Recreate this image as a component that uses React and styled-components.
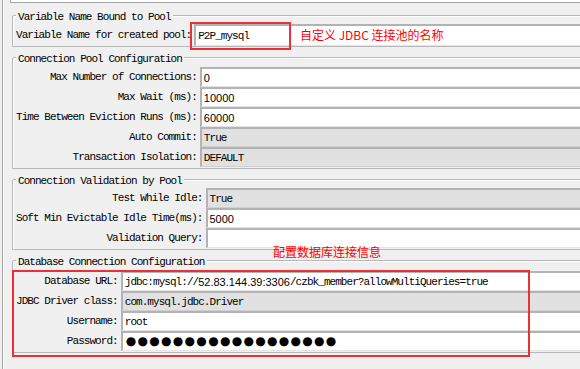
import React from "react";
import styled, { createGlobalStyle, css } from "styled-components";

const Global = createGlobalStyle`
  html, body { margin: 0; padding: 0; background: #f0f0f0; }
  #root { width: 580px; height: 369px; overflow: hidden; }
`;

const mono = css`
  font-family: "Liberation Mono", "DejaVu Sans Mono", monospace;
  font-size: 11px;
  letter-spacing: -0.95px;
  color: #000;
`;

const sans = css`
  font-family: "Liberation Sans", Arial, sans-serif;
  font-size: 11px;
  letter-spacing: 0;
  color: #000;
`;

const Page = styled.div`
  position: relative;
  width: 580px;
  height: 369px;
  overflow: hidden;
  background: #f0f0f0;
  padding-left: 2px;
  box-sizing: border-box;
`;

const Panel = styled.div`
  width: 720px;
  height: 100%;
  border-left: 1px solid #a6a6a6;
  box-shadow: inset 1px 0 0 #ffffff;
  padding-left: 9px;
  box-sizing: border-box;
`;

const TopField = styled.div`
  margin-left: -2px;
  height: 3px;
  box-sizing: border-box;
  background: #ffffff;
  border-left: 1px solid #a8a8a8;
  border-bottom: 1px solid #a8a8a8;
`;

const Frame = styled.section`
  position: relative;
  margin-top: ${(p) => p.$mt}px;
  padding: ${(p) => p.$pt}px 0 ${(p) => p.$pb}px 3px;
  border: 1px solid #b8b8b8;
  border-top-left-radius: 2px;
  box-shadow: inset 1px 1px 0 #ffffff;
`;

const Title = styled.span`
  position: absolute;
  top: -6px;
  left: 3px;
  padding: 0 2px;
  line-height: 14px;
  background: #f0f0f0;
  white-space: nowrap;
  ${mono}
`;

const Grid = styled.div`
  display: grid;
  grid-template-columns: max-content 1fr;
  grid-auto-rows: ${(p) => p.$row || 20}px;
  column-gap: 3px;
`;

const Label = styled.label`
  align-self: center;
  text-align: right;
  white-space: nowrap;
  line-height: 14px;
  ${mono}
`;

const Field = styled.div`
  display: flex;
  align-items: center;
  box-sizing: border-box;
  height: 100%;
  padding-left: 2px;
  white-space: nowrap;
  background: ${(p) => (p.$gray ? "#e1e1e1" : "#ffffff")};
  border-top: 2px solid #b3b3b3;
  border-left: 2px solid #b3b3b3;
  border-bottom: 1px solid ${(p) => (p.$gray ? "#d0d0d0" : "#e4e4e4")};
  ${(p) => (p.$sans ? sans : mono)}
`;

const Num = styled.span`
  ${sans}
`;

const Dots = styled.span`
  font-family: "DejaVu Sans", sans-serif;
  font-size: 12px;
  letter-spacing: 1.3px;
  line-height: 14px;
  color: #000;
  padding-left: 1px;
  margin-top: -2px;
`;

const Note = styled.div`
  position: absolute;
  left: ${(p) => p.$x}px;
  top: ${(p) => p.$y}px;
  font-family: "Noto Sans CJK SC", "Microsoft YaHei", sans-serif;
  font-size: 12px;
  line-height: 16px;
  color: #ff0000;
  white-space: nowrap;
`;

const RedBox = styled.div`
  position: absolute;
  left: ${(p) => p.$x}px;
  top: ${(p) => p.$y}px;
  width: ${(p) => p.$w}px;
  height: ${(p) => p.$h}px;
  box-sizing: border-box;
  border: 2px solid #ec3038;
  pointer-events: none;
`;

export default function App() {
  return (
    <>
      <Global />
      <Page>
        <Panel>
          <TopField />

          <Frame $mt={12} $pt={8} $pb={0}>
            <Title>Variable Name Bound to Pool</Title>
            <Grid $row={22}>
              <Label>Variable Name for created pool:</Label>
              <Field>P2P_mysql</Field>
            </Grid>
          </Frame>

          <Frame $mt={10} $pt={9} $pb={1}>
            <Title>Connection Pool Configuration</Title>
            <Grid>
              <Label>Max Number of Connections:</Label>
              <Field $sans>0</Field>
              <Label>Max Wait (ms):</Label>
              <Field $sans>10000</Field>
              <Label>Time Between Eviction Runs (ms):</Label>
              <Field $sans>60000</Field>
              <Label>Auto Commit:</Label>
              <Field $gray>True</Field>
              <Label>Transaction Isolation:</Label>
              <Field $gray>DEFAULT</Field>
            </Grid>
          </Frame>

          <Frame $mt={10} $pt={8} $pb={1}>
            <Title>Connection Validation by Pool</Title>
            <Grid>
              <Label>Test While Idle:</Label>
              <Field $gray>True</Field>
              <Label>Soft Min Evictable Idle Time(ms):</Label>
              <Field $sans>5000</Field>
              <Label>Validation Query:</Label>
              <Field></Field>
            </Grid>
          </Frame>

          <Frame $mt={10} $pt={10} $pb={1}>
            <Title>Database Connection Configuration</Title>
            <Grid>
              <Label>Database URL:</Label>
              <Field>
                jdbc:mysql://<Num>52.83.144.39:3306</Num>/czbk_member?allowMultiQueries=true
              </Field>
              <Label>JDBC Driver class:</Label>
              <Field $gray>com.mysql.jdbc.Driver</Field>
              <Label>Username:</Label>
              <Field>root</Field>
              <Label>Password:</Label>
              <Field>
                <Dots>●●●●●●●●●●●●●●●●●●</Dots>
              </Field>
            </Grid>
          </Frame>
        </Panel>

        <RedBox $x={190} $y={22} $w={101} $h={28} />
        <Note $x={300} $y={27}>自定义 JDBC 连接池的名称</Note>
        <Note $x={273} $y={244}>配置数据库连接信息</Note>
        <RedBox $x={12} $y={270} $w={518} $h={87} />
      </Page>
    </>
  );
}
